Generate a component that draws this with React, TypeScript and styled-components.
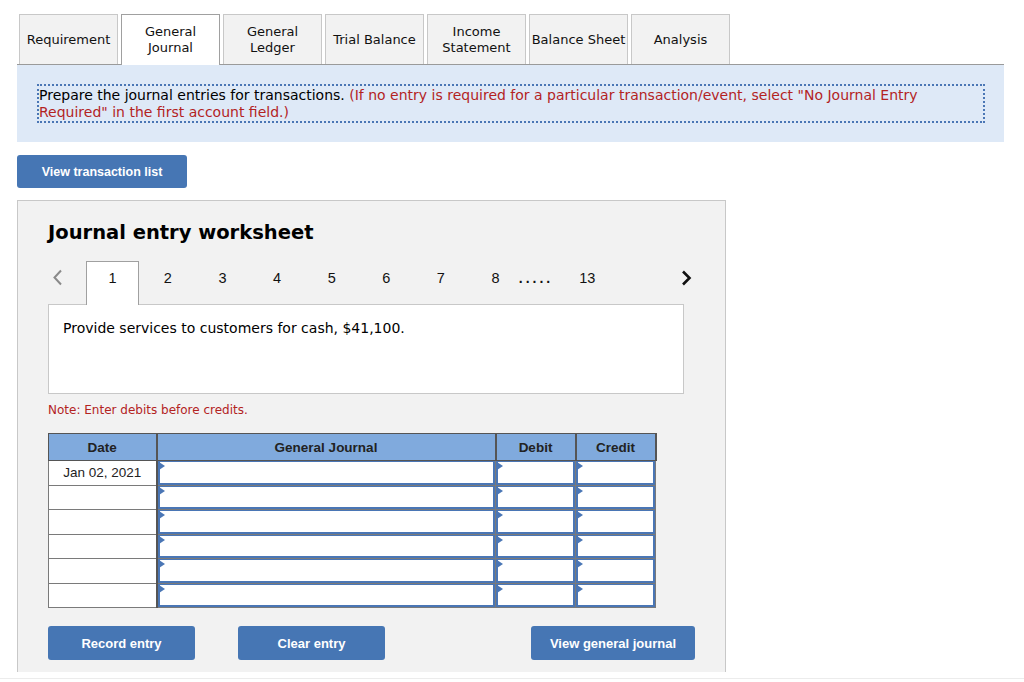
import React from "react";
import styled, { createGlobalStyle, css } from "styled-components";

const GlobalStyle = createGlobalStyle`
  html, body { margin: 0; padding: 0; background: #ffffff; }
  body { font-family: "DejaVu Sans", Verdana, sans-serif; color: #000; }
  * { box-sizing: border-box; }
`;

const Page = styled.div`
  padding: 14px 20px 0 17px;
`;

const TabBar = styled.div`
  display: flex;
  gap: 3px;
  padding-left: 2px;
  position: relative;
  z-index: 1;
`;

const Tab = styled.div<{ $active?: boolean }>`
  width: 99px;
  height: 50px;
  display: flex;
  align-items: center;
  justify-content: center;
  text-align: center;
  font-size: 13px;
  line-height: 16px;
  color: #111;
  background: #f2f2f2;
  border: 1px solid #c8c8c8;
  border-bottom: none;
  ${(p) =>
    p.$active &&
    css`
      background: #ffffff;
      border-color: #a0a0a0;
      height: 51px;
      margin-bottom: -1px;
    `}
`;

const InfoPanel = styled.div`
  width: 987px;
  background: #dee9f7;
  border-top: 1px solid #9a9a9a;
  padding: 19px 19px 19px 20px;
`;

const DottedBox = styled.div`
  border: 2px dotted #4a76b5;
  font-size: 14px;
  line-height: 17px;
  padding: 1px 0 0 0;
  height: 39px;
`;

const Red = styled.span`
  color: #b3231f;
`;

const PrimaryButton = styled.button<{ $width: number }>`
  width: ${(p) => p.$width}px;
  height: 34px;
  border: none;
  border-radius: 3px;
  background: #4676b4;
  color: #ffffff;
  font-family: "Liberation Sans", Arial, sans-serif;
  font-weight: bold;
  font-size: 13px;
  padding: 0;
  cursor: pointer;
`;

const TransactionButton = styled(PrimaryButton)`
  margin-top: 13px;
  height: 33px;
  font-size: 12.5px;
`;

const Worksheet = styled.div`
  margin-top: 12px;
  width: 709px;
  background: #f2f2f2;
  border: 1px solid #c8c8c8;
  border-bottom: none;
  padding: 20px 30px 12px 30px;
`;

const Title = styled.h2`
  margin: 0;
  font-size: 19.5px;
  line-height: 24px;
  font-weight: bold;
  color: #000;
`;

const Pager = styled.div`
  margin-top: 16px;
  height: 43px;
  display: flex;
  align-items: flex-start;
  font-family: "Liberation Sans", Arial, sans-serif;
  font-size: 14.5px;
  line-height: 16px;
  color: #111;
`;

const ArrowSlot = styled.div`
  width: 38px;
  padding-top: 8px;
  padding-left: 4px;
  display: flex;
`;

const PageCell = styled.div<{ $active?: boolean }>`
  width: 54.6px;
  height: 100%;
  padding-top: 9px;
  text-align: center;
  ${(p) =>
    p.$active &&
    css`
      width: 53px;
      margin-right: 1.6px;
      background: #ffffff;
      border: 1px solid #a0a0a0;
      border-bottom: none;
      height: 44px;
      padding-top: 8px;
      margin-bottom: -1px;
      position: relative;
      z-index: 1;
    `}
`;

const Dots = styled.div`
  margin-left: -4px;
  width: 50px;
  padding-top: 9px;
  font-weight: bold;
  letter-spacing: 3px;
  font-size: 14px;
`;

const LastCell = styled.div`
  width: 37px;
  padding-top: 9px;
  text-align: center;
`;

const Spacer = styled.div`
  flex: 1;
`;

const NextSlot = styled.div`
  padding-right: 3px;
  padding-top: 9px;
  display: flex;
`;

const DescriptionBox = styled.div`
  width: 636px;
  height: 90px;
  background: #ffffff;
  border: 1px solid #c8c8c8;
  padding: 15px 14px;
  font-size: 14px;
  line-height: 17px;
`;

const Note = styled.div`
  margin-top: 8px;
  font-size: 12px;
  line-height: 16px;
  color: #b3231f;
`;

const Table = styled.table`
  margin-top: 15px;
  border-collapse: collapse;
  table-layout: fixed;
  width: 607px;
  font-family: "Liberation Sans", Arial, sans-serif;
`;

const HeadCell = styled.th<{ $w: number }>`
  width: ${(p) => p.$w}px;
  height: 27px;
  background: #80aadd;
  border: 1px solid #555;
  border-right-width: 2px;
  font-size: 13.5px;
  font-weight: bold;
  color: #222;
  padding: 0;
`;

const DateCell = styled.td`
  height: 24.5px;
  background: #ffffff;
  border: 1px solid #7a7a7a;
  border-right: 2px solid #555;
  text-align: center;
  vertical-align: top;
  padding-top: 4px;
  font-size: 13.5px;
  color: #222;
`;

const InputCell = styled.td`
  height: 24.5px;
  border: 1px solid #7a7a7a;
  padding: 0;
  position: relative;
  background: #ffffff;
`;

const InputBox = styled.div`
  position: absolute;
  inset: 0;
  border: 2px solid #4a76b5;
  border-top-width: 1.5px;
  background: #ffffff;
`;

const Marker = styled.div`
  position: absolute;
  left: 1px;
  top: 1px;
  width: 0;
  height: 0;
  border-top: 4px solid transparent;
  border-bottom: 4px solid transparent;
  border-left: 6px solid #4a76b5;
`;

const ButtonRow = styled.div`
  margin-top: 18px;
  display: flex;
  align-items: center;
  gap: 43px;
`;

const BottomLine = styled.div`
  margin-top: 6px;
  margin-left: -17px;
  margin-right: -20px;
  border-top: 1px solid #ececec;
  height: 5px;
`;

const tabs: { label: React.ReactNode; active?: boolean }[] = [
  { label: "Requirement" },
  { label: <>General<br />Journal</>, active: true },
  { label: <>General<br />Ledger</> },
  { label: "Trial Balance" },
  { label: <>Income<br />Statement</> },
  { label: "Balance Sheet" },
  { label: "Analysis" },
];

const Input = () => (
  <InputCell>
    <InputBox />
    <Marker />
  </InputCell>
);

export default function App() {
  const rows = ["Jan 02, 2021", "", "", "", "", ""];
  return (
    <>
      <GlobalStyle />
      <Page>
        <TabBar>
          {tabs.map((t, i) => (
            <Tab key={i} $active={t.active}>
              <span>{t.label}</span>
            </Tab>
          ))}
        </TabBar>
        <InfoPanel>
          <DottedBox>
            Prepare the journal entries for transactions.{" "}
            <Red>
              (If no entry is required for a particular transaction/event, select "No Journal Entry
              Required" in the first account field.)
            </Red>
          </DottedBox>
        </InfoPanel>

        <TransactionButton $width={170}>View transaction list</TransactionButton>

        <Worksheet>
          <Title>Journal entry worksheet</Title>
          <Pager>
            <ArrowSlot>
              <svg width="11" height="17" viewBox="0 0 11 17">
                <path d="M9 1.5 L2.5 8.5 L9 15.5" fill="none" stroke="#8a8a8a" strokeWidth="2" />
              </svg>
            </ArrowSlot>
            {[1, 2, 3, 4, 5, 6, 7, 8].map((n) => (
              <PageCell key={n} $active={n === 1}>
                {n}
              </PageCell>
            ))}
            <Dots>.....</Dots>
            <LastCell>13</LastCell>
            <Spacer />
            <NextSlot>
              <svg width="11" height="16" viewBox="0 0 11 16">
                <path d="M2 1.5 L8.5 8 L2 14.5" fill="none" stroke="#111" strokeWidth="2.6" />
              </svg>
            </NextSlot>
          </Pager>
          <DescriptionBox>Provide services to customers for cash, $41,100.</DescriptionBox>
          <Note>Note: Enter debits before credits.</Note>
          <Table>
            <thead>
              <tr>
                <HeadCell $w={108}>Date</HeadCell>
                <HeadCell $w={339}>General Journal</HeadCell>
                <HeadCell $w={80}>Debit</HeadCell>
                <HeadCell $w={80}>Credit</HeadCell>
              </tr>
            </thead>
            <tbody>
              {rows.map((d, i) => (
                <tr key={i}>
                  <DateCell>{d}</DateCell>
                  <Input />
                  <Input />
                  <Input />
                </tr>
              ))}
            </tbody>
          </Table>
          <ButtonRow>
            <PrimaryButton $width={147}>Record entry</PrimaryButton>
            <PrimaryButton $width={147}>Clear entry</PrimaryButton>
            <Spacer />
            <PrimaryButton $width={164}>View general journal</PrimaryButton>
          </ButtonRow>
        </Worksheet>
        <BottomLine />
      </Page>
    </>
  );
}
